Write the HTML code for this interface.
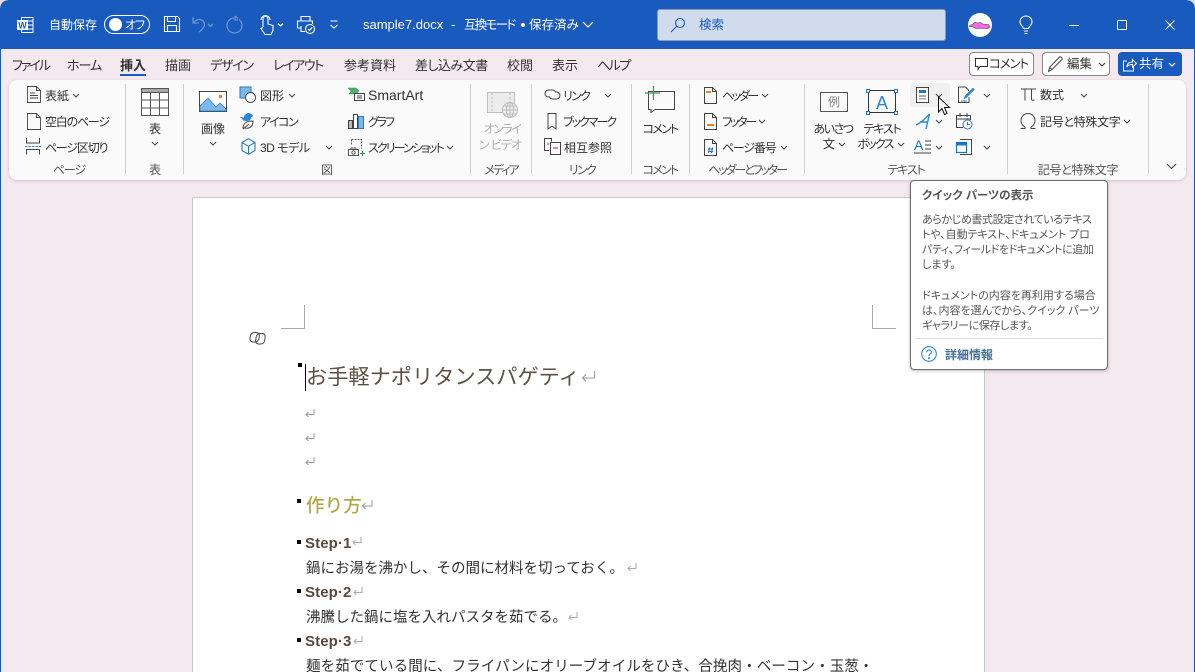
<!DOCTYPE html>
<html lang="ja"><head><meta charset="utf-8"><title>sample7.docx</title>
<style>
html,body{margin:0;padding:0;height:672px;overflow:hidden;background:#f3e9ef}
body{width:1195px;position:relative;font-family:"Liberation Sans","Noto Sans CJK JP",sans-serif;color:#323130}
.t{position:absolute;white-space:nowrap;font-size:12px;line-height:16px;height:16px;margin-top:1px;font-feature-settings:"palt"}
.w{color:#fff}
.c{text-align:center;transform:translateX(-50%)}
.g{color:#555}
svg{position:absolute;overflow:visible}
.box{position:absolute;box-sizing:border-box}
.sep{position:absolute;top:84px;height:90px;width:1px;background:#d2d0ce}
.doc{position:absolute;white-space:nowrap;font-size:15px;line-height:20px;color:#333}
.step{position:absolute;white-space:nowrap;font-size:15px;line-height:20px;font-weight:700;color:#5b4a3c;letter-spacing:.1px}
.bul{position:absolute;width:4px;height:4px;background:#000}
.tab{font-size:13px}
.tip{font-size:11px;color:#555}
</style></head><body>
<!-- title bar -->
<div class="box" style="left:0;top:0;width:1195px;height:49px;background:#185abd"></div>
<div class="box" style="left:0;top:49px;width:1px;height:623px;background:#185abd"></div>
<div class="box" style="left:1194px;top:49px;width:1px;height:623px;background:#185abd"></div>
<svg style="left:16px;top:15px" width="20" height="20" viewBox="0 0 20 20" fill="none" stroke="#fff"><path d="M5.500 2.500h11.500v15h-11.500z M10 6h7 M10 10h7 M10 14h7"/><rect x="1" y="5" width="11" height="10" fill="#fff" stroke="none"/><text x="6.500" y="13.500" text-anchor="middle" font-size="9" font-weight="700" fill="#185abd" stroke="none" font-family="Liberation Sans">W</text></svg>
<div class="t w" style="left:49px;top:16px;font-size:12px">自動保存</div>
<div class="box" style="left:104px;top:15px;width:46px;height:19px;border:1.300px solid #fff;border-radius:10px"></div>
<div class="box" style="left:109px;top:18px;width:13px;height:13px;background:#fff;border-radius:50%"></div>
<div class="t w" style="left:125px;top:16px;font-size:12px;letter-spacing:-1px">オフ</div>
<svg style="left:163px;top:15px" width="18" height="18" viewBox="0 0 18 18" fill="none" stroke="#fff" stroke-width="1.100"><path d="M1.500 1.500h13l2 2v13h-15z M4.500 1.500v5h8v-5 M4.500 16.500v-6h9v6"/></svg>
<svg style="left:167px;top:15px;opacity:.5" width="110" height="20" viewBox="0 0 110 20" fill="none" stroke="#b9cdeb" stroke-width="1.300"><path d="M26 2v6h6 M26.500 7.500c3-3.500 7-4 9.500-1.500 3 3 1.500 7-4 11"/><path d="M41 9l2.500 2.500L46 9"/><path d="M71 3.500l-3-2.500 M67 3a7.500 7.500 0 1 0 5 1.500 M68 1v4h3"/></svg>
<svg style="left:257px;top:14px" width="28" height="22" viewBox="0 0 28 22" fill="none" stroke="#fff" stroke-width="1.100"><path d="M6 13V5a2.500 2.500 0 0 1 5 0v5l5 1.500v5l-2 4H8l-4-6 2-1"/><path d="M4 6a4.500 4.500 0 0 1 9 0"/><path d="M21 9.500l2.500 2.500L26 9.500" stroke-width="1.300"/></svg>
<svg style="left:296px;top:15px" width="20" height="20" viewBox="0 0 20 20" fill="none" stroke="#fff" stroke-width="1.100"><path d="M5 6V1.500h9V6 M5 13H1.500V6h15v3 M5 11v5.500h4"/><circle cx="14" cy="14" r="4.500"/><path d="M12 14l1.500 1.500 2.500-3"/></svg>
<svg style="left:329px;top:20px" width="10" height="10" viewBox="0 0 10 10" fill="none" stroke="#fff" stroke-width="1.100"><path d="M1.500 1h7 M1.500 5l3.500 3 3.500-3"/></svg>
<div class="t w" style="left:363px;top:16px;font-size:13px">sample7.docx</div>
<div class="t w" style="left:451px;top:16px;font-size:13px">-</div>
<div class="t w" style="left:464px;top:16px;font-size:12.500px;letter-spacing:-1.700px">互換モード</div>
<div class="box" style="left:521px;top:23px;width:4px;height:4px;background:#fff;border-radius:50%"></div>
<div class="t w" style="left:529px;top:16px;font-size:12.500px">保存済み</div>
<svg style="left:582px;top:21px" width="12" height="8" viewBox="0 0 12 8" fill="none" stroke="#fff" stroke-width="1.200"><path d="M1 1l5 5 5-5"/></svg>
<!-- search -->
<div class="box" style="left:657px;top:9px;width:289px;height:32px;background:#d0dcee;border:1px solid #8b9cb8;border-radius:3px"></div>
<svg style="left:670px;top:17px" width="16" height="16" viewBox="0 0 16 16" fill="none" stroke="#185abd" stroke-width="1.100"><circle cx="10" cy="6" r="4.500"/><path d="M6.500 9.500L1 15"/></svg>
<div class="t" style="left:699px;top:16px;font-size:12.500px;color:#185abd">検索</div>
<!-- avatar -->
<div class="box" style="left:968px;top:13px;width:24px;height:24px;background:#fff;border-radius:50%"></div>
<svg style="left:968px;top:13px" width="24" height="24" viewBox="0 0 24 24"><path d="M1.500 12.500l3-1 2-2 4 .5 2-.5 2 1.500 6 .5 1.500 2.500-2 1.500H8l-3-1.500-3.500-.5z" fill="#f06be0" stroke="#5a3a5a" stroke-width=".6"/></svg>
<svg style="left:1019px;top:16px" width="14" height="19" viewBox="0 0 14 19" fill="none" stroke="#fff" stroke-width="1.100"><path d="M4.500 12.500C4 10 1 9 1 6a6 6 0 0 1 12 0c0 3-3 4-3.500 6.500z M5 15h4 M5.500 17.500h3"/></svg>
<div class="box" style="left:1069px;top:25px;width:10px;height:1px;background:#fff"></div>
<div class="box" style="left:1117px;top:20px;width:10px;height:10px;border:1px solid #fff;border-radius:1px"></div>
<svg style="left:1165px;top:20px" width="10" height="10" viewBox="0 0 10 10" fill="none" stroke="#fff" stroke-width="1"><path d="M.5.500l9 9 M9.500.500l-9 9"/></svg>

<!-- tabs -->
<div class="t tab" style="left:12px;top:57px;letter-spacing:-2px">ファイル</div>
<div class="t tab" style="left:67px;top:57px;letter-spacing:-1px">ホーム</div>
<div class="t tab" style="left:120px;top:57px;font-weight:700;color:#333">挿入</div>
<div class="box" style="left:120px;top:74px;width:26px;height:2px;background:#185abd"></div>
<div class="t tab" style="left:165px;top:57px">描画</div>
<div class="t tab" style="left:210px;top:57px;letter-spacing:-1.200px">デザイン</div>
<div class="t tab" style="left:273px;top:57px;letter-spacing:-1.400px">レイアウト</div>
<div class="t tab" style="left:344px;top:57px">参考資料</div>
<div class="t tab" style="left:415px;top:57px;letter-spacing:-.5px">差し込み文書</div>
<div class="t tab" style="left:507px;top:57px">校閲</div>
<div class="t tab" style="left:552px;top:57px">表示</div>
<div class="t tab" style="left:597px;top:57px;letter-spacing:-1.500px">ヘルプ</div>
<!-- top right buttons -->
<div class="box" style="left:969px;top:52px;width:65px;height:24px;background:#fff;border:1px solid #8a8886;border-radius:4px"></div>
<svg style="left:975px;top:58px" width="14" height="13" viewBox="0 0 14 13" fill="none" stroke="#333" stroke-width="1"><path d="M.5.500h12v8H5l-2 3v-3H.5z"/></svg>
<div class="t" style="left:989px;top:55px;font-size:12.500px;letter-spacing:-1.200px">コメント</div>
<div class="box" style="left:1042px;top:52px;width:68px;height:24px;background:#fff;border:1px solid #8a8886;border-radius:4px"></div>
<svg style="left:1047px;top:55px" width="18" height="18" viewBox="0 0 18 18" fill="none" stroke="#444" stroke-width="1"><path d="M1.500 16.500l1-4L12.500 2c1-1 3.500 1.500 2.500 2.500L5 14.500z M2.500 12.500l2.500 2"/></svg>
<div class="t" style="left:1067px;top:55px;font-size:12.500px">編集</div>
<svg style="left:1098px;top:62px" width="8" height="6" viewBox="0 0 8 6" fill="none" stroke="#333" stroke-width="1.100"><path d="M1 1l3 3 3-3"/></svg>
<div class="box" style="left:1118px;top:52px;width:64px;height:24px;background:#185abd;border-radius:4px"></div>
<svg style="left:1122px;top:57px" width="15" height="15" viewBox="0 0 15 15" fill="none" stroke="#fff" stroke-width="1"><path d="M5 4H1.500v10h10V9 M5 10c0-4 3-5 5.500-5V2.500l4 4-4 3.500V7.500C8 7.500 6 8 5 10z"/></svg>
<div class="t w" style="left:1139px;top:55px;font-size:12.500px">共有</div>
<svg style="left:1168px;top:62px" width="8" height="6" viewBox="0 0 8 6" fill="none" stroke="#fff" stroke-width="1.200"><path d="M1 1l3 3 3-3"/></svg>

<!-- ribbon -->
<div class="box" style="left:9px;top:80px;width:1177px;height:100px;background:#fafafa;border-radius:8px;box-shadow:0 1px 3px rgba(0,0,0,.16)"></div>
<div class="sep" style="left:125px"></div><div class="sep" style="left:183px"></div><div class="sep" style="left:470px"></div><div class="sep" style="left:531px"></div><div class="sep" style="left:631px"></div><div class="sep" style="left:689px"></div><div class="sep" style="left:804px"></div><div class="sep" style="left:1007px"></div><div class="sep" style="left:1148px"></div>

<!-- page group -->
<svg style="left:27px;top:86px" width="15" height="17" viewBox="0 0 15 17" fill="none" stroke="#444"><path d="M.5.500h9l4 4v12H.5z M9.500.500v4h4 M3 7h5 M3 9.500h8 M3 12h8" stroke-width=".9"/></svg>
<div class="t" style="left:45px;top:87px">表紙</div>
<svg style="left:72px;top:93px" width="8" height="6" viewBox="0 0 8 6" fill="none" stroke="#444" stroke-width="1.100"><path d="M1 1l3 3 3-3"/></svg>
<svg style="left:27px;top:113px" width="15" height="17" viewBox="0 0 15 17" fill="none" stroke="#444"><path d="M.5.500h9l4 4v12H.5z M9.500.500v4h4" stroke-width=".9"/></svg>
<div class="t" style="left:45px;top:113px;letter-spacing:-1.200px">空白のページ</div>
<svg style="left:25px;top:138px" width="16" height="17" viewBox="0 0 16 17" fill="none" stroke="#444"><path d="M1.500 0v5h13V0 M1.500 16.500v-5h13v5"/><path d="M0 8.500h16" stroke="#2b88d8" stroke-dasharray="2.500 1"/></svg>
<div class="t" style="left:45px;top:139px;letter-spacing:-1.200px">ページ区切り</div>
<div class="t c g" style="left:69px;top:161px;letter-spacing:-1px">ページ</div>

<!-- table -->
<svg style="left:141px;top:88px" width="28" height="28" viewBox="0 0 28 28" fill="none" stroke="#555"><rect x=".5" y=".5" width="27" height="27" fill="#fff"/><rect x=".5" y=".5" width="27" height="4" fill="#a8a8a8"/><path d="M9.500 4v24 M18.500 4v24 M0 12h28 M0 20h28"/></svg>
<div class="t c" style="left:155px;top:120px">表</div>
<svg style="left:151px;top:141px" width="8" height="6" viewBox="0 0 8 6" fill="none" stroke="#444" stroke-width="1.100"><path d="M1 1l3 3 3-3"/></svg>
<div class="t c g" style="left:155px;top:161px">表</div>

<!-- image group -->
<svg style="left:199px;top:91px" width="28" height="22" viewBox="0 0 28 22"><rect x=".5" y=".5" width="27" height="20" fill="#fff" stroke="#444"/><path d="M1 15l8-8 8 9 4-4 6 6v2H1z" fill="#7cb8ea" stroke="#2b78c2" stroke-width=".7"/><circle cx="21.500" cy="5.500" r="1.700" fill="#e8811e"/></svg>
<div class="t c" style="left:213px;top:120px">画像</div>
<svg style="left:209px;top:141px" width="8" height="6" viewBox="0 0 8 6" fill="none" stroke="#444" stroke-width="1.100"><path d="M1 1l3 3 3-3"/></svg>
<svg style="left:240px;top:87px" width="17" height="17" viewBox="0 0 17 17"><rect x="0" y="0" width="11" height="11" fill="#7cb8ea" stroke="#2b78c2"/><circle cx="10.500" cy="10.500" r="5" fill="#fafafa" stroke="#444"/></svg>
<div class="t" style="left:260px;top:87px">図形</div>
<svg style="left:288px;top:93px" width="8" height="6" viewBox="0 0 8 6" fill="none" stroke="#444" stroke-width="1.100"><path d="M1 1l3 3 3-3"/></svg>
<svg style="left:240px;top:113px" width="15" height="17" viewBox="0 0 15 17" fill="none"><path d="M0 4l4 1 1-3 3-2 3 1 2 2-2 1-1 3-4 1-3-1-1-2z" fill="#2b88d8" stroke="#2b78c2" stroke-width=".5"/><path d="M3 15c0-4 3-7 10-7 0 5-3 8-8 7z M3 16l6-5" stroke="#444"/></svg>
<div class="t" style="left:260px;top:113px;letter-spacing:-1.500px">アイコン</div>
<svg style="left:241px;top:138px" width="15" height="17" viewBox="0 0 15 17" fill="none" stroke="#2b78c2" stroke-width="1.100"><path d="M7.500.700l6.500 3.800v8l-6.500 3.800L1 12.500v-8z M1 4.500l6.500 3.800L14 4.500 M7.500 8.300v8"/></svg>
<div class="t" style="left:260px;top:139px;letter-spacing:-.5px">3D モデル</div>
<svg style="left:325px;top:145px" width="8" height="6" viewBox="0 0 8 6" fill="none" stroke="#444" stroke-width="1.100"><path d="M1 1l3 3 3-3"/></svg>
<svg style="left:348px;top:87px" width="18" height="15" viewBox="0 0 18 15" fill="none"><path d="M0 1h8l3 3-3 3H1l2-3z" fill="#4caf6e" stroke="#2f8f4f" stroke-width=".5"/><rect x="6.500" y="6.500" width="10" height="7" fill="#fafafa" stroke="#444"/><path d="M9 9h5 M9 11h5" stroke="#444"/></svg>
<div class="t" style="left:368px;top:86px;font-size:14px">SmartArt</div>
<svg style="left:348px;top:113px" width="17" height="17" viewBox="0 0 17 17" stroke="#444" fill="#fafafa"><rect x=".5" y="7.500" width="4" height="8" fill="#bbb"/><rect x="5.500" y="1.500" width="4" height="14"/><rect x="10.500" y="3.500" width="5" height="12" fill="#7cb8ea" stroke="#2b78c2"/></svg>
<div class="t" style="left:368px;top:113px;letter-spacing:-2.200px">グラフ</div>
<svg style="left:348px;top:139px" width="17" height="17" viewBox="0 0 17 17" fill="none" stroke="#555"><path d="M3.500.500h10v9" stroke-dasharray="2 1"/><path d="M3.500.500v6" stroke-dasharray="2 1"/><rect x=".5" y="10.500" width="10" height="6" fill="#fafafa"/><circle cx="5.500" cy="13.500" r="1.700"/><path d="M2.500 10.500l1-1.500h4l1 1.500"/><path d="M14.500 12v5 M12 14.500h5" stroke="#2f8f4f"/></svg>
<div class="t" style="left:368px;top:139px;letter-spacing:-1.900px">スクリーンショット</div>
<svg style="left:446px;top:145px" width="8" height="6" viewBox="0 0 8 6" fill="none" stroke="#444" stroke-width="1.100"><path d="M1 1l3 3 3-3"/></svg>
<div class="t c g" style="left:327px;top:161px">図</div>

<!-- media -->
<svg style="left:487px;top:92px" width="32" height="28" viewBox="0 0 32 28" fill="none" stroke="#bdbdbd"><rect x=".5" y=".5" width="27" height="20" fill="#ececec"/><path d="M5 1v19 M23 1v19" stroke-dasharray="2 2"/><circle cx="23" cy="18" r="7.500" fill="#ececec"/><path d="M15.500 18h15 M23 10.500v15 M17 14h12 M17 22h12"/><ellipse cx="23" cy="18" rx="3.500" ry="7.500"/></svg>
<div class="t c" style="left:502px;top:120px;color:#b0b0b0;letter-spacing:-1.400px">オンライ</div>
<div class="t c" style="left:500px;top:136px;color:#b0b0b0;letter-spacing:-1px">ン ビデオ</div>
<div class="t c g" style="left:501px;top:161px;letter-spacing:-2px">メディア</div>

<!-- link -->
<svg style="left:544px;top:89px" width="17" height="11" viewBox="0 0 17 11" fill="none" stroke="#444"><path d="M6 8H4.500a3.500 3.500 0 0 1 0-7h4a3.500 3.500 0 0 1 3 2 M11 3h1.500a3.500 3.500 0 0 1 0 7h-4a3.500 3.500 0 0 1-3-2"/></svg>
<div class="t" style="left:563px;top:87px;letter-spacing:-1.600px">リンク</div>
<svg style="left:604px;top:93px" width="8" height="6" viewBox="0 0 8 6" fill="none" stroke="#444" stroke-width="1.100"><path d="M1 1l3 3 3-3"/></svg>
<svg style="left:547px;top:113px" width="10" height="17" viewBox="0 0 10 17" fill="none" stroke="#444"><path d="M1 .500h8v15.500L5 13l-4 3z"/></svg>
<div class="t" style="left:563px;top:113px;letter-spacing:-2px">ブックマーク</div>
<svg style="left:544px;top:138px" width="17" height="17" viewBox="0 0 17 17" fill="none" stroke="#444"><path d="M5 12.500H.5v-12h7v3"/><rect x="6.500" y="4.500" width="10" height="12"/><path d="M9 10h5" stroke="#e81123"/><path d="M3 6h2" stroke="#e81123"/></svg>
<div class="t" style="left:564px;top:139px">相互参照</div>
<div class="t c g" style="left:582px;top:161px;letter-spacing:-1.600px">リンク</div>

<!-- comment -->
<svg style="left:645px;top:86px" width="31" height="29" viewBox="0 0 31 29" fill="none"><path d="M3.500 7.500h26v18H10l-4 3v-3H3.500z" stroke="#444" fill="#fafafa" transform="translate(0 -2)"/><path d="M8.500 0v14 M0 7h15" stroke="#2f9e4f" stroke-width="1.200"/></svg>
<div class="t c" style="left:660px;top:120px;letter-spacing:-1.800px">コメント</div>
<div class="t c g" style="left:660px;top:161px;letter-spacing:-1.800px">コメント</div>

<!-- header footer -->
<svg style="left:704px;top:87px" width="13" height="17" viewBox="0 0 13 17" fill="none" stroke="#444"><path d="M.5.500h8l4 4v12H.5z M8.500.500v4h4"/><rect x="2" y="4" width="5" height="2" fill="#e8811e" stroke="none"/></svg>
<div class="t" style="left:722px;top:87px;letter-spacing:-2.400px">ヘッダー</div>
<svg style="left:761px;top:93px" width="8" height="6" viewBox="0 0 8 6" fill="none" stroke="#444" stroke-width="1.100"><path d="M1 1l3 3 3-3"/></svg>
<svg style="left:704px;top:113px" width="13" height="17" viewBox="0 0 13 17" fill="none" stroke="#444"><path d="M.5.500h8l4 4v12H.5z M8.500.500v4h4"/><rect x="3" y="11" width="7" height="2" fill="#e8811e" stroke="none"/></svg>
<div class="t" style="left:722px;top:113px;letter-spacing:-2.200px">フッター</div>
<svg style="left:758px;top:119px" width="8" height="6" viewBox="0 0 8 6" fill="none" stroke="#444" stroke-width="1.100"><path d="M1 1l3 3 3-3"/></svg>
<svg style="left:704px;top:139px" width="13" height="17" viewBox="0 0 13 17" fill="none" stroke="#444"><path d="M.5.500h8l4 4v12H.5z M8.500.500v4h4"/><path d="M4 10h5 M4 12.500h5 M5.500 8.500l-1 5.500 M8.500 8.500l-1 5.500" stroke="#1c74c9"/></svg>
<div class="t" style="left:722px;top:139px;letter-spacing:-1.200px">ページ番号</div>
<svg style="left:780px;top:145px" width="8" height="6" viewBox="0 0 8 6" fill="none" stroke="#444" stroke-width="1.100"><path d="M1 1l3 3 3-3"/></svg>
<div class="t c g" style="left:747px;top:161px;letter-spacing:-2.100px">ヘッダーとフッター</div>

<!-- text group -->
<div class="box" style="left:820px;top:92px;width:28px;height:20px;border:1px solid #555;background:#fafafa"></div>
<div class="t c" style="left:834px;top:93px;color:#888">例</div>
<div class="t c" style="left:833px;top:120px;letter-spacing:-1.500px">あいさつ</div>
<div class="t c" style="left:829px;top:135px">文</div>
<svg style="left:838px;top:142px" width="8" height="6" viewBox="0 0 8 6" fill="none" stroke="#444" stroke-width="1.100"><path d="M1 1l3 3 3-3"/></svg>
<div class="box" style="left:868px;top:90px;width:28px;height:23px;border:1px solid #333;background:#fafafa"></div>
<div class="box" style="left:866px;top:89px;width:4px;height:4px;border:1px solid #1c74c9;background:#fff"></div>
<div class="box" style="left:894px;top:89px;width:4px;height:4px;border:1px solid #1c74c9;background:#fff"></div>
<div class="box" style="left:866px;top:111px;width:4px;height:4px;border:1px solid #1c74c9;background:#fff"></div>
<div class="box" style="left:894px;top:111px;width:4px;height:4px;border:1px solid #1c74c9;background:#fff"></div>
<div class="t c" style="left:882px;top:94px;font-size:18px;color:#2b88d8">A</div>
<div class="t c" style="left:882px;top:120px;letter-spacing:-1.200px">テキスト</div>
<div class="t c" style="left:875px;top:135px;letter-spacing:-1.700px">ボックス</div>
<svg style="left:897px;top:142px" width="8" height="6" viewBox="0 0 8 6" fill="none" stroke="#444" stroke-width="1.100"><path d="M1 1l3 3 3-3"/></svg>

<div class="box" style="left:910px;top:83px;width:40px;height:24px;background:#f0f0f0;border-radius:4px"></div>
<svg style="left:916px;top:87px" width="13" height="16" viewBox="0 0 13 16"><rect x=".5" y=".5" width="12" height="15" fill="#fff" stroke="#444"/><rect x="3" y="3" width="7" height="3" fill="#2b78c2"/><rect x="3" y="8" width="7" height="2" fill="#aaa"/><rect x="3" y="11" width="7" height="1.500" fill="#aaa"/></svg>
<svg style="left:935px;top:93px" width="8" height="6" viewBox="0 0 8 6" fill="none" stroke="#444" stroke-width="1.100"><path d="M1 1l3 3 3-3"/></svg>
<svg style="left:915px;top:113px" width="16" height="17" viewBox="0 0 16 17" fill="none" stroke="#2b88d8" stroke-width="1.400"><path d="M1 12C6 10 10 6 14.500 1L11 16 M5 9h8"/></svg>
<svg style="left:935px;top:119px" width="8" height="6" viewBox="0 0 8 6" fill="none" stroke="#444" stroke-width="1.100"><path d="M1 1l3 3 3-3"/></svg>
<div class="t" style="left:914px;top:136px;font-size:14px;color:#1c74c9">A</div>
<svg style="left:914px;top:139px" width="18" height="15" viewBox="0 0 18 15" fill="none" stroke="#444"><path d="M11 2h6 M11 6h6 M11 10h6 M0 14h17"/></svg>
<svg style="left:935px;top:145px" width="8" height="6" viewBox="0 0 8 6" fill="none" stroke="#444" stroke-width="1.100"><path d="M1 1l3 3 3-3"/></svg>
<svg style="left:958px;top:86px" width="17" height="18" viewBox="0 0 17 18" fill="none"><path d="M.5 1h7l3 3v1 M11 11v5.500H.5V1" stroke="#444"/><path d="M6 13l1-3 8-8 1.500 1.500-8 8z" fill="#2b88d8" stroke="#2b78c2" stroke-width=".5"/><path d="M3 15h6" stroke="#2b78c2"/></svg>
<svg style="left:983px;top:93px" width="8" height="6" viewBox="0 0 8 6" fill="none" stroke="#444" stroke-width="1.100"><path d="M1 1l3 3 3-3"/></svg>
<svg style="left:956px;top:113px" width="17" height="17" viewBox="0 0 17 17" fill="none" stroke="#444"><path d="M7 14.500H.5v-12h14V7 M.5 6h14 M4 0v4 M11 0v4"/><circle cx="11.500" cy="11.500" r="4.500" fill="#fafafa" stroke="#2b78c2"/><path d="M11.500 9v2.500H14" stroke="#2b78c2"/></svg>
<svg style="left:956px;top:139px" width="16" height="16" viewBox="0 0 16 16" fill="none"><path d="M4 .500h11.500v15H4" stroke="#444"/><rect x=".5" y="3.500" width="10" height="10" fill="#fafafa" stroke="#1c74c9" stroke-width="1.200"/><rect x=".5" y="3.500" width="10" height="3" fill="#1c74c9"/></svg>
<svg style="left:983px;top:145px" width="8" height="6" viewBox="0 0 8 6" fill="none" stroke="#444" stroke-width="1.100"><path d="M1 1l3 3 3-3"/></svg>
<div class="t c g" style="left:906px;top:161px;letter-spacing:-1.200px">テキスト</div>

<!-- symbols -->
<svg style="left:1021px;top:88px" width="16" height="13" viewBox="0 0 16 13" fill="none" stroke="#444"><path d="M0 1h15 M4 1v11.500 M10.500 1v10c0 1.500 1.500 1.500 3 1"/></svg>
<div class="t" style="left:1040px;top:86px">数式</div>
<svg style="left:1080px;top:93px" width="8" height="6" viewBox="0 0 8 6" fill="none" stroke="#444" stroke-width="1.100"><path d="M1 1l3 3 3-3"/></svg>
<svg style="left:1020px;top:113px" width="16" height="16" viewBox="0 0 16 16" fill="none" stroke="#444"><path d="M.5 15.500h4.500v-1.500C2.500 12.500 1 10.500 1 7.500a7 7 0 0 1 14 0c0 3-1.500 5-4 6.500v1.500h4.500"/></svg>
<div class="t" style="left:1040px;top:113px;letter-spacing:-.3px">記号と特殊文字</div>
<svg style="left:1123px;top:119px" width="8" height="6" viewBox="0 0 8 6" fill="none" stroke="#444" stroke-width="1.100"><path d="M1 1l3 3 3-3"/></svg>
<div class="t c g" style="left:1078px;top:161px;letter-spacing:-.3px">記号と特殊文字</div>
<svg style="left:1166px;top:163px" width="11" height="7" viewBox="0 0 11 7" fill="none" stroke="#444" stroke-width="1.100"><path d="M1 1l4.500 4.500L10 1"/></svg>

<!-- page -->
<div class="box" style="left:192px;top:197px;width:793px;height:475px;background:#fff;border:1px solid #c8c6c4;border-bottom:0"></div>
<div class="box" style="left:281px;top:305px;width:24px;height:24px;border-right:1px solid #a8a8a8;border-bottom:1px solid #a8a8a8"></div>
<div class="box" style="left:872px;top:305px;width:24px;height:24px;border-left:1px solid #a8a8a8;border-bottom:1px solid #a8a8a8"></div>
<svg style="left:249px;top:331px" width="16" height="14" viewBox="0 0 16 14" fill="none" stroke="#444"><rect x=".5" y="1.500" width="9" height="9.500" rx="3.500" transform="skewX(-8) translate(1.500 0)"/><rect x="6" y="2.500" width="9" height="10.500" rx="3.500" transform="skewX(-8) translate(2 0)"/></svg>
<div class="bul" style="left:298px;top:363px"></div>
<div class="box" style="left:305px;top:364px;width:1px;height:27px;background:#000"></div>
<div class="doc" style="left:306px;top:365px;font-size:21.200px;line-height:26px;color:#5d5144">お手軽ナポリタンスパゲティ</div>
<svg style="left:581px;top:371px" width="15" height="12" viewBox="0 0 15 12" fill="none" stroke="#999" stroke-width="1.100"><path d="M13.500 0v7H2 M5 3.500L1.500 7 5 10.500"/></svg>
<svg style="left:305px;top:409px" width="10" height="10" viewBox="0 0 10 10" fill="none" stroke="#999"><path d="M9 0v5.500H1 M3.500 3L1 5.500 3.500 8"/></svg>
<svg style="left:305px;top:433px" width="10" height="10" viewBox="0 0 10 10" fill="none" stroke="#999"><path d="M9 0v5.500H1 M3.500 3L1 5.500 3.500 8"/></svg>
<svg style="left:305px;top:457px" width="10" height="10" viewBox="0 0 10 10" fill="none" stroke="#999"><path d="M9 0v5.500H1 M3.500 3L1 5.500 3.500 8"/></svg>
<div class="bul" style="left:297px;top:499px"></div>
<div class="doc" style="left:306px;top:494px;font-size:18.500px;line-height:24px;color:#b5a74a;font-weight:500;letter-spacing:.1px">作り方</div>
<svg style="left:361px;top:500px" width="12" height="11" viewBox="0 0 12 11" fill="none" stroke="#999"><path d="M11 0v6H1.500 M4.500 3L1.500 6l3 3"/></svg>

<div class="bul" style="left:297px;top:540px"></div>
<div class="step" style="left:305px;top:534px">Step·1</div>
<svg style="left:352px;top:537px" width="10" height="10" viewBox="0 0 10 10" fill="none" stroke="#aaa"><path d="M9 0v5.500H1 M3.500 3L1 5.500 3.500 8"/></svg>
<div class="doc" style="left:306px;top:559px;font-size:14.500px">鍋にお湯を沸かし、その間に材料を切っておく。</div>
<svg style="left:627px;top:563px" width="10" height="10" viewBox="0 0 10 10" fill="none" stroke="#aaa"><path d="M9 0v5.500H1 M3.500 3L1 5.500 3.500 8"/></svg>
<div class="bul" style="left:297px;top:589px"></div>
<div class="step" style="left:305px;top:583px">Step·2</div>
<svg style="left:353px;top:587px" width="10" height="10" viewBox="0 0 10 10" fill="none" stroke="#aaa"><path d="M9 0v5.500H1 M3.500 3L1 5.500 3.500 8"/></svg>
<div class="doc" style="left:306px;top:608px;font-size:14.500px">沸騰した鍋に塩を入れパスタを茹でる。</div>
<svg style="left:568px;top:612px" width="10" height="10" viewBox="0 0 10 10" fill="none" stroke="#aaa"><path d="M9 0v5.500H1 M3.500 3L1 5.500 3.500 8"/></svg>
<div class="bul" style="left:297px;top:638px"></div>
<div class="step" style="left:305px;top:632px">Step·3</div>
<svg style="left:353px;top:636px" width="10" height="10" viewBox="0 0 10 10" fill="none" stroke="#aaa"><path d="M9 0v5.500H1 M3.500 3L1 5.500 3.500 8"/></svg>
<div class="doc" style="left:306px;top:657px;font-size:14.500px;letter-spacing:.1px">麺を茹でている間に、フライパンにオリーブオイルをひき、合挽肉・ベーコン・玉葱・</div>

<!-- tooltip -->
<div class="box" style="left:910px;top:180px;width:198px;height:190px;background:#fff;border:1px solid #6e6e6e;border-radius:4px;box-shadow:0 1px 3px rgba(0,0,0,.25)"></div>
<div class="t" style="left:922px;top:187px;font-size:11.500px;font-weight:700;color:#555">クイック パーツの表示</div>
<div class="t tip" style="left:922px;top:211px;letter-spacing:-.4px">あらかじめ書式設定されているテキス</div>
<div class="t tip" style="left:922px;top:226px;letter-spacing:-.1px">トや、自動テキスト、ドキュメント プロ</div>
<div class="t tip" style="left:922px;top:241px;letter-spacing:-.45px">パティ、フィールドをドキュメントに追加</div>
<div class="t tip" style="left:922px;top:256px">します。</div>
<div class="t tip" style="left:922px;top:287px">ドキュメントの内容を再利用する場合</div>
<div class="t tip" style="left:922px;top:302px">は、内容を選んでから、クイック パーツ</div>
<div class="t tip" style="left:922px;top:317px;letter-spacing:-.4px">ギャラリーに保存します。</div>
<div class="box" style="left:915px;top:338px;width:188px;height:1px;background:#ddd"></div>
<svg style="left:921px;top:346px" width="16" height="16" viewBox="0 0 16 16" fill="none" stroke="#2b88d8" stroke-width="1.100"><circle cx="8" cy="8" r="7.300"/><path d="M5.800 6.200c0-3 4.600-3 4.600 0 0 2-2.400 1.800-2.400 3.800"/><circle cx="8" cy="12.200" r=".5"/></svg>
<div class="t" style="left:945px;top:346px;font-size:12px;font-weight:700;color:#41719c">詳細情報</div>

<!-- cursor -->
<svg style="left:937px;top:96px" width="14" height="20" viewBox="0 0 14 20"><path d="M1.500 1v15l3.500-3.500 2.500 6 2.500-1-2.500-6h5z" fill="#fff" stroke="#111" stroke-width="1"/></svg>

<!-- corners -->
<div class="box" style="left:0;top:0;width:8px;height:8px;background:radial-gradient(circle at 8px 8px,transparent 7.500px,#e8d9e3 8px)"></div>
<div class="box" style="left:1187px;top:0;width:8px;height:8px;background:radial-gradient(circle at 0 8px,transparent 7.500px,#e8d9e3 8px)"></div>
</body></html>
